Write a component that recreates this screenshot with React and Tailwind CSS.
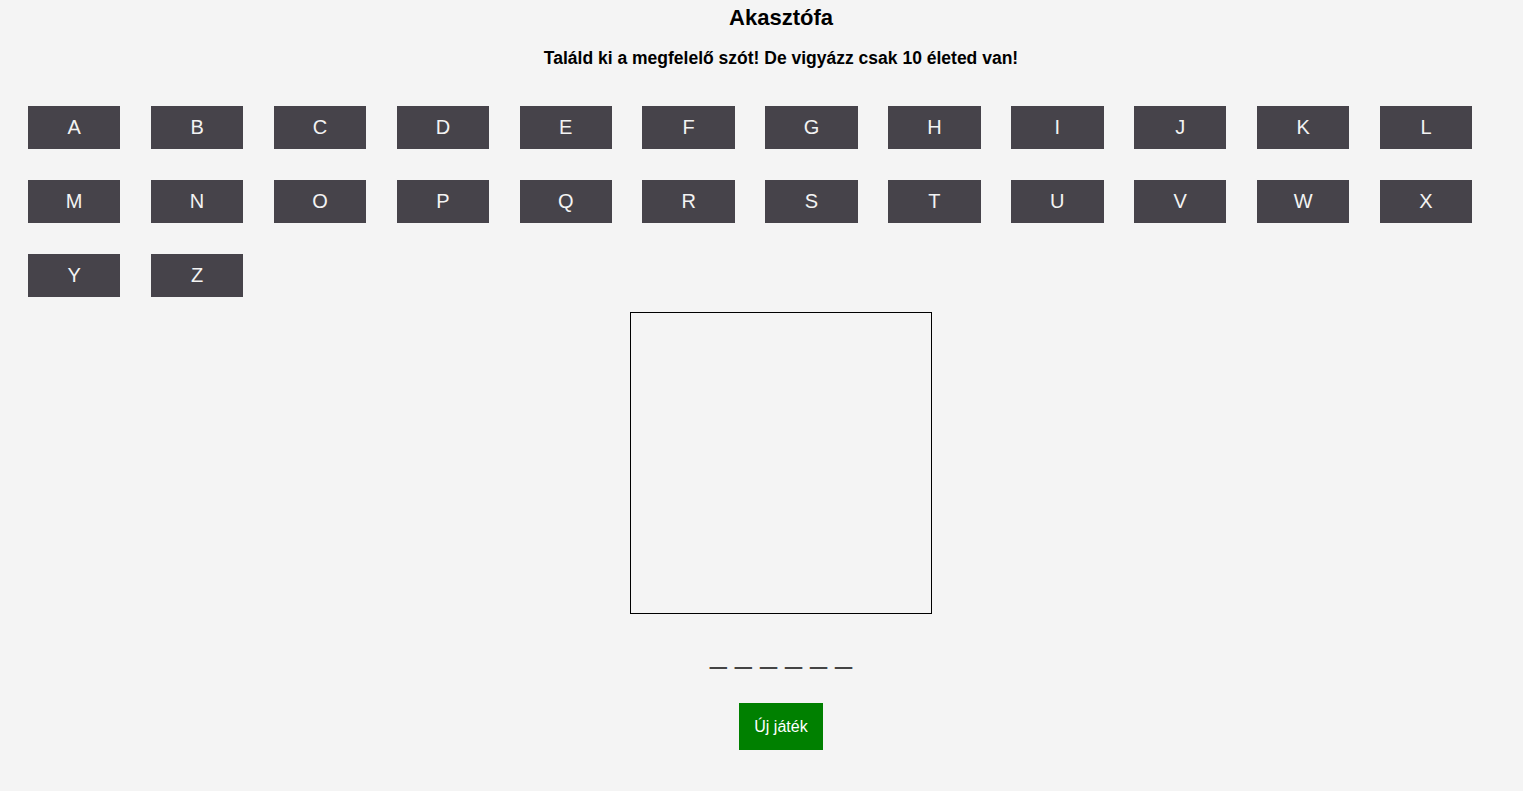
export default function App() {
  const letters = "ABCDEFGHIJKLMNOPQRSTUVWXYZ".split("");
  return (
    <div className="min-h-screen w-full overflow-hidden bg-[#f4f4f4] text-black font-['Liberation_Sans',Arial,sans-serif]">
      <div className="w-[1562px] flex flex-col">
        <h1 className="mt-[5px] text-center text-[22px] leading-[25px] font-bold">Akasztófa</h1>
        <p className="mt-[18px] text-center text-[17.5px] leading-[20px] font-bold">
          Találd ki a megfelelő szót! De vigyázz csak 10 életed van!
        </p>
        <div className="mt-[38px] pl-[28px] w-[1523px] flex flex-wrap gap-x-[30.5px] gap-y-[31px]">
          {letters.map((l) => (
            <button
              key={l}
              className="w-[92.4px] h-[43px] pb-[2px] bg-[#46434a] text-[#f3f3f3] text-[20px] flex items-center justify-center"
            >
              {l}
            </button>
          ))}
        </div>
        <div className="mt-[15px] self-center w-[302px] h-[302px] border border-black"></div>
        <div className="mt-[22px] text-center text-[30px] leading-[34px] text-[#444]">_ _ _ _ _ _</div>
        <div className="mt-[33px] flex justify-center">
          <button className="w-[84px] h-[47px] bg-[#008000] text-white text-[16px] flex items-center justify-center">
            Új játék
          </button>
        </div>
      </div>
    </div>
  );
}
